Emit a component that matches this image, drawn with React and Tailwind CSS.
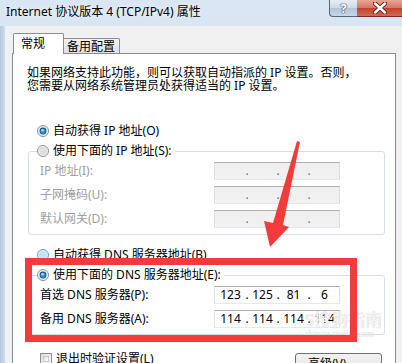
import React from 'react'

const FONT = "font-[family-name:'Noto_Sans','Noto_Sans_CJK_SC',sans-serif]"

const Radio = ({ on, hover }) => (
  <svg width="12" height="12" viewBox="0 0 12 12" className="shrink-0">
    <circle cx="6" cy="6" r="5.5" fill={hover ? '#e6f3fc' : '#f4f4f4'} stroke={hover ? '#5d9ccc' : '#8e8f8f'} />
    <circle cx="6" cy="6" r="4" fill={hover ? '#c6e3f6' : '#dedede'} />
    {on && (
      <>
        <circle cx="6" cy="6" r="3.4" fill="#1a5a93" />
        <circle cx="6" cy="6.3" r="2.5" fill="#2f8ccc" />
        <circle cx="5.6" cy="5.2" r="1.3" fill="#a9dcf6" />
      </>
    )}
  </svg>
)

const RadioRow = ({ on, hover, children, className = '' }) => (
  <div className={`flex items-center gap-[4px] h-[14px] ${className}`}>
    <Radio on={on} hover={hover} />
    <span className="text-[12px] leading-[14px] text-black whitespace-nowrap">{children}</span>
  </div>
)

const IpBox = ({ values, disabled }) => {
  const v = values || ['', '', '', '']
  const widths = ['w-[31px]', 'w-[29px]', 'w-[29px]', 'w-[29px]']
  return (
    <div
      className={`flex items-center h-[18px] w-[126px] border border-[#abadb3] border-b-[#e3e9ef] border-x-[#dbdfe6] ${
        disabled ? 'bg-[#f0f0f0] text-[#6d6d6d]' : 'bg-white text-black'
      }`}
    >
      {v.map((n, i) => (
        <React.Fragment key={i}>
          <span className={`${widths[i]} text-center text-[12px] leading-[16px] whitespace-nowrap`}>{n}</span>
          {i < 3 && <span className="w-[2px] flex justify-center text-[12px] leading-[16px]">.</span>}
        </React.Fragment>
      ))}
    </div>
  )
}

const FieldRow = ({ label, disabled, values }) => (
  <div className="flex items-center h-[18px]">
    <span className={`w-[174px] text-[12px] leading-[14px] whitespace-nowrap ${disabled ? 'text-[#a0a0a0]' : 'text-black'}`}>
      {label}
    </span>
    <IpBox values={values} disabled={disabled} />
  </div>
)

export default function App() {
  return (
    <div className={`relative w-[402px] h-[363px] overflow-hidden flex flex-col bg-[linear-gradient(180deg,#dae6f3,#c6d8ec)] ${FONT}`}>
      {/* title bar */}
      <div className="flex h-[26px] shrink-0">
        <div className="pl-[6px] pt-[4px] text-[12px] leading-[16px] text-black whitespace-nowrap [text-shadow:0_0_6px_#ffffff]">
          Internet 协议版本 4 (TCP/IPv4) 属性
        </div>
        <div className="ml-auto flex h-[17px]">
          <div className="w-[28px] h-[17px] rounded-bl-[4px] border border-t-0 border-r-0 border-[#56657c] bg-[linear-gradient(180deg,#e6edf5_0%,#cdd9e6_50%,#b4c4d7_51%,#c8d6e5_100%)] flex items-center justify-center">
            <span className="text-white font-bold text-[13px] leading-[14px] [text-shadow:0_0_1px_#2b3a50,0_0_1px_#2b3a50,0_0_1px_#2b3a50]">?</span>
          </div>
          <div className="w-[45px] h-[17px] border-b border-[#7a2a20] bg-[linear-gradient(180deg,#e8a594_0%,#d9756a_48%,#c4432f_52%,#d26a50_100%)] flex items-center justify-center">
            <svg width="14" height="12" viewBox="0 0 14 12">
              <path d="M2 1.5 L12 10.5 M12 1.5 L2 10.5" stroke="#5a1a12" strokeWidth="4.2" strokeLinecap="round" />
              <path d="M2 1.5 L12 10.5 M12 1.5 L2 10.5" stroke="#ffffff" strokeWidth="2.4" strokeLinecap="round" />
            </svg>
          </div>
        </div>
      </div>

      {/* dialog body */}
      <div className="flex-1 ml-[5px] bg-[#f0f0f0] pt-[7px] pl-[7px] pr-[6px] flex flex-col">
        {/* tabs */}
        <div className="flex items-end pl-[1px]">
          <div className="relative z-10 -mb-px h-[21px] w-[51px] bg-white border border-b-0 border-[#898c95] rounded-t-[2px] pl-[7px] text-[12px] leading-[19px] text-black">
            常规
          </div>
          <div className="h-[15px] w-[56px] border border-l-0 border-b-0 border-[#898c95] rounded-tr-[2px] bg-[linear-gradient(180deg,#f2f2f2,#e1e1e1)] pl-[3px] text-[12px] leading-[15px] text-black">
            备用配置
          </div>
        </div>

        {/* panel */}
        <div className="flex-1 bg-white border border-[#898c95] pt-[12px] pl-[14px] pr-[10px] flex flex-col">
          <p className="text-[12px] leading-[13px] text-black whitespace-nowrap">
            如果网络支持此功能，则可以获取自动指派的 IP 设置。否则，
            <br />
            您需要从网络系统管理员处获得适当的 IP 设置。
          </p>

          <RadioRow on className="mt-[32px] ml-[10px]">自动获得 IP 地址(O)</RadioRow>

          <fieldset className="mt-[6px] ml-[1px] border border-[#d5dfe5] rounded-[3px] pl-[11px] pb-[6px] pt-[4px] flex flex-col gap-[6px]">
            <legend className="-ml-[3px] pr-[3px] bg-white">
              <RadioRow>使用下面的 IP 地址(S):</RadioRow>
            </legend>
            <FieldRow label="IP 地址(I):" disabled />
            <FieldRow label="子网掩码(U):" disabled />
            <FieldRow label="默认网关(D):" disabled />
          </fieldset>

          <RadioRow hover className="mt-[13px] ml-[10px]">自动获得 DNS 服务器地址(B)</RadioRow>

          <fieldset className="mt-[6px] ml-[1px] border border-[#d5dfe5] rounded-[3px] pl-[11px] pb-[6px] pt-[4px] flex flex-col gap-[6px]">
            <legend className="-ml-[3px] pr-[3px] bg-white">
              <RadioRow on>使用下面的 DNS 服务器地址(E):</RadioRow>
            </legend>
            <FieldRow label="首选 DNS 服务器(P):" values={['123', '125', '81', '6']} />
            <FieldRow label="备用 DNS 服务器(A):" values={['114', '114', '114', '114']} />
          </fieldset>

          <div className="mt-[18px] flex items-start justify-between">
            <div className="ml-[13px] flex items-center gap-[4px] h-[12px]">
              <div className="w-[12px] h-[12px] border border-[#8e8f8f] bg-[linear-gradient(135deg,#dcdcdc,#fbfbfb)] p-[2px]">
                <div className="w-full h-full border border-[#c8c8c8] bg-[linear-gradient(135deg,#e4e4e4,#ffffff)]" />
              </div>
              <span className="text-[12px] leading-[14px] text-black whitespace-nowrap">退出时验证设置(L)</span>
            </div>
            <div className="mr-[3px] w-[87px] h-[22px] rounded-[3px] border border-[#707070] bg-[linear-gradient(180deg,#f2f2f2_0%,#ebebeb_50%,#dddddd_51%,#cfcfcf_100%)] pl-[12px] text-[12px] leading-[20px] text-black whitespace-nowrap">
              高级(V)...
            </div>
          </div>
        </div>
      </div>

      {/* left frame edge */}
      <div className="absolute left-0 top-[26px] w-[5px] h-[337px] bg-[linear-gradient(90deg,#b4c8df,#cfdcec)]" />

      {/* watermark */}
      <div className="absolute left-[305px] top-[311px] flex flex-col items-start leading-none pointer-events-none">
        <span className="text-[17px] leading-[18px] text-[#f4f4f4] [text-shadow:0_0_1px_#b9b9b9]">S搜狗指南</span>
        <span className="text-[8px] leading-[9px] text-[#f4f4f4] [text-shadow:0_0_1px_#c2c2c2]">zhinan.sogou.com</span>
      </div>

      {/* red annotation box */}
      <div className="absolute left-[25px] top-[258px] w-[332px] h-[84px] border-[7px] border-[#f33b3b]" />

      {/* red arrow */}
      <svg className="absolute left-0 top-0 pointer-events-none" width="402" height="363" viewBox="0 0 402 363">
        <polygon points="297,141 300,142 283,225 289,227 270,247 264,221 273,223" fill="#f33b3b" />
      </svg>
    </div>
  )
}
